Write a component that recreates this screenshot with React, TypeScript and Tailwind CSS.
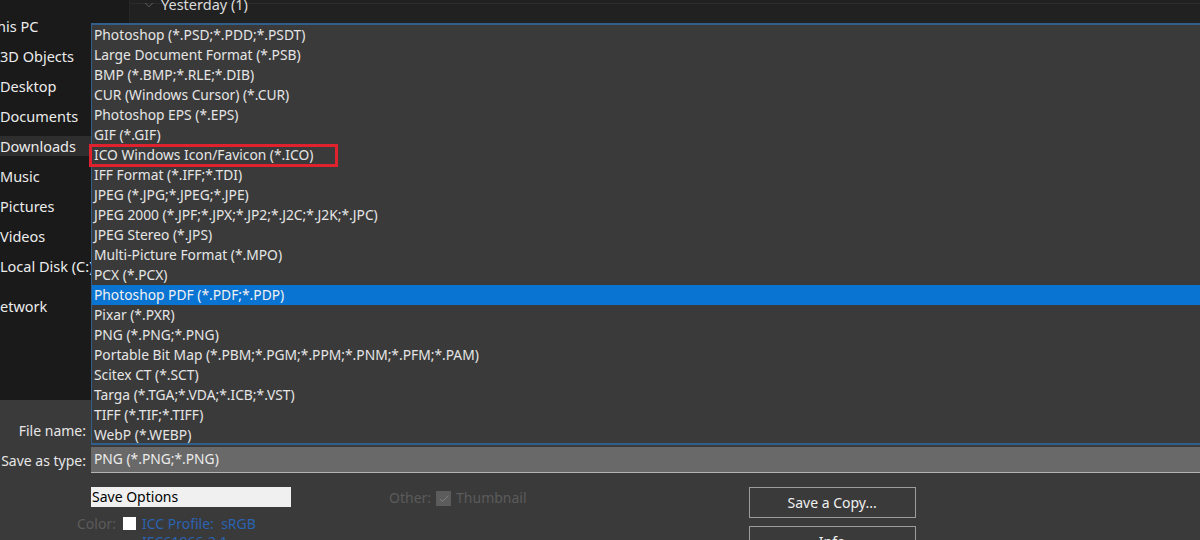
import { Check, ChevronDown } from "lucide-react"

const places = [
  { label: "This PC", cls: "-ml-[11px]" },
  { label: "3D Objects" },
  { label: "Desktop" },
  { label: "Documents" },
  { label: "Downloads", active: true },
  { label: "Music" },
  { label: "Pictures" },
  { label: "Videos" },
  { label: "Local Disk (C:)" },
]

const formats = [
  "Photoshop (*.PSD;*.PDD;*.PSDT)",
  "Large Document Format (*.PSB)",
  "BMP (*.BMP;*.RLE;*.DIB)",
  "CUR (Windows Cursor) (*.CUR)",
  "Photoshop EPS (*.EPS)",
  "GIF (*.GIF)",
  "ICO Windows Icon/Favicon (*.ICO)",
  "IFF Format (*.IFF;*.TDI)",
  "JPEG (*.JPG;*.JPEG;*.JPE)",
  "JPEG 2000 (*.JPF;*.JPX;*.JP2;*.J2C;*.J2K;*.JPC)",
  "JPEG Stereo (*.JPS)",
  "Multi-Picture Format (*.MPO)",
  "PCX (*.PCX)",
  "Photoshop PDF (*.PDF;*.PDP)",
  "Pixar (*.PXR)",
  "PNG (*.PNG;*.PNG)",
  "Portable Bit Map (*.PBM;*.PGM;*.PPM;*.PNM;*.PFM;*.PAM)",
  "Scitex CT (*.SCT)",
  "Targa (*.TGA;*.VDA;*.ICB;*.VST)",
  "TIFF (*.TIF;*.TIFF)",
  "WebP (*.WEBP)",
]

const TypeDropdown = () => {
  return (
    <div className="absolute left-[91px] right-0 top-[23px] h-[422px] bg-[#3a3a3a] border-t-2 border-b-2 border-l border-[#2f5f8a]">
      {formats.map((f) => {
        const selected = f.startsWith("Photoshop PDF")
        const marked = f.startsWith("ICO")
        return (
          <div
            key={f}
            className={`relative h-[20px] leading-[19px] pl-[2px] text-[13.8px] whitespace-nowrap ${selected ? "bg-[#0a74d2] text-[#f2f2f2]" : "text-[#e6e6e6]"}`}
          >
            {f}
            {marked && (
              <span className="absolute -left-[3px] -top-[1px] w-[249px] h-[23px] border-[3px] border-[#e0222e]" />
            )}
          </div>
        )
      })}
    </div>
  )
}

export default function App() {
  return (
    <div className="relative w-[1200px] h-[540px] overflow-hidden bg-[#3a3a3a] font-['Noto_Sans','Open_Sans',sans-serif]">
      <div className="flex h-[400px]">
        <div className="w-[130px] bg-[#1a1a1a] border-r border-[#262626] pt-[16px] text-[14.5px] text-[#ececec] overflow-hidden">
          {places.map((p) => (
            <div key={p.label} className="h-[30px] leading-[20px]">
              <div className={`h-[20px] whitespace-nowrap ${p.active ? "bg-[#2e2e2e]" : ""} ${p.cls ?? ""}`}>{p.label}</div>
            </div>
          ))}
          <div className="mt-[10px] -ml-[11px] h-[20px] leading-[20px]">Network</div>
        </div>
        <div className="flex-1 bg-[#212121]">
          <div className="h-[4px] border-b border-[#2c2c2c]" />
          <div className="flex items-center gap-[5px] pl-[12px] h-[18px] -mt-[8px] text-[14.5px] text-[#dcdcdc]">
            <ChevronDown size={14} strokeWidth={1.2} className="text-[#7a7a7a]" />
            <span>Yesterday (1)</span>
          </div>
        </div>
      </div>

      <div className="text-[14px]">
        <div className="flex h-[47px] items-end pb-[6px]">
          <span className="w-[86px] text-right text-[#e6e6e6]">File name:</span>
        </div>
        <div className="flex h-[26px] items-center">
          <span className="w-[86px] text-right text-[#e6e6e6] whitespace-nowrap">Save as type:</span>
          <div className="ml-[5px] flex-1 h-[26px] bg-[#696969] border-b border-[#b4b4b4] pl-[3px] leading-[24px] text-[13.8px] text-[#ececec]">
            PNG (*.PNG;*.PNG)
          </div>
        </div>
        <div className="flex mt-[14px]">
          <div className="ml-[91px] w-[200px]">
            <div className="h-[20px] bg-[#f0f0f0] text-black leading-[20px] pl-[1px]">Save Options</div>
            <div className="flex items-center h-[20px] mt-[6px] -ml-[14px] text-[#5b5b5b]">
              <span>Color:</span>
              <span className="ml-[7px] w-[13px] h-[13px] bg-white" />
              <span className="ml-[6px] text-[#2a63b2]">ICC Profile:&nbsp; sRGB</span>
            </div>
            <div className="ml-[51px] h-[18px] leading-[18px] text-[#2a63b2]">IEC61966-2.1</div>
          </div>
          <div className="ml-[98px] flex items-start h-[20px] text-[#5b5b5b]">
            <span className="leading-[22px]">Other:</span>
            <span className="ml-[5px] mt-[4px] w-[15px] h-[15px] bg-[#5c5c5c] flex items-center justify-center">
              <Check size={12} strokeWidth={1.5} className="text-[#8a8a8a]" />
            </span>
            <span className="ml-[5px] leading-[22px]">Thumbnail</span>
          </div>
          <div className="ml-[222px] flex flex-col gap-[8px]">
            <button className="w-[167px] h-[31px] border border-[#9c9c9c] bg-[#3a3a3a] text-[#f0f0f0] text-[14px]">Save a Copy...</button>
            <button className="w-[167px] h-[31px] border border-[#9c9c9c] bg-[#3a3a3a] text-[#f0f0f0] text-[14px]">Info</button>
          </div>
        </div>
      </div>

      <TypeDropdown />
    </div>
  )
}
